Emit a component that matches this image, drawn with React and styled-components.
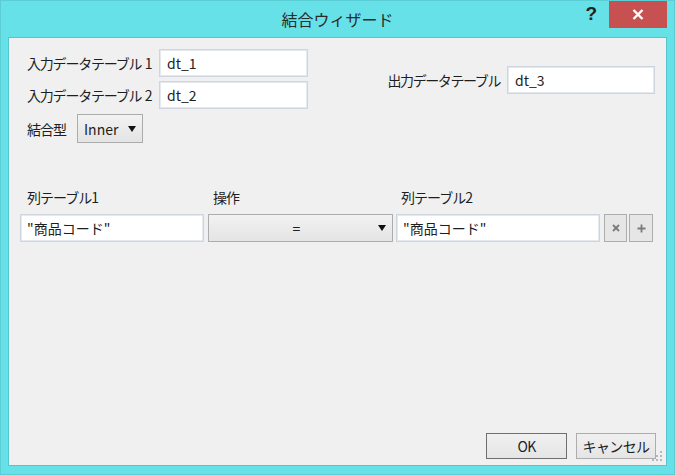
import React from "react";
import styled, { createGlobalStyle } from "styled-components";

const Global = createGlobalStyle`
  html, body { margin: 0; padding: 0; }
  body {
    width: 675px; height: 475px; overflow: hidden;
    font-family: "Noto Sans CJK JP", "Noto Sans", sans-serif;
    background: #67e1e8;
  }
`;

const Window = styled.div`
  width: 675px;
  height: 475px;
  box-sizing: border-box;
  background: #67e1e8;
  border: 1px solid #5bcdd5;
  display: flex;
  flex-direction: column;
  position: relative;
`;

const TitleBar = styled.div`
  height: 36px;
  display: flex;
  align-items: center;
  justify-content: center;
  position: relative;
  flex-shrink: 0;
`;

const Title = styled.div`
  font-size: 16px;
  color: #2a2a2a;
  margin-top: -1px;
`;

const Help = styled.div`
  position: absolute;
  right: 77px;
  top: 2px;
  font-family: "Liberation Sans", sans-serif;
  font-weight: bold;
  font-size: 19px;
  color: #222;
`;

const Close = styled.div`
  position: absolute;
  right: 7px;
  top: 0;
  width: 58px;
  height: 27px;
  background: #c75050;
  display: flex;
  align-items: center;
  justify-content: center;
`;

const Client = styled.div`
  margin: 0 7px 8px 7px;
  flex: 1;
  background: #f0f0f0;
  border: 1px solid #55c4cc;
  display: flex;
  flex-direction: column;
  padding: 11px 10px 6px 11px;
  position: relative;
  font-size: 14px;
  color: #1e1e1e;
`;

const Top = styled.div`
  display: flex;
  justify-content: space-between;
  padding-right: 1px;
`;

const LeftBlock = styled.div`
  display: flex;
  flex-direction: column;
  gap: 4px;
  padding-left: 7px;
`;

const FieldRow = styled.div`
  display: flex;
  align-items: center;
  margin-top: ${(p) => p.$mt || 0}px;
`;

const Label = styled.div`
  width: ${(p) => (p.$w ? p.$w + "px" : "auto")};
  letter-spacing: ${(p) => p.$ls ?? -1}px;
  white-space: pre;
`;

const TextBox = styled.div`
  box-sizing: border-box;
  width: ${(p) => p.$w}px;
  height: 28px;
  background: #fff;
  border: 1px solid #cfd5e0;
  box-shadow: inset 0 0 0 1px #e4e8ef;
  display: flex;
  align-items: center;
  padding-left: ${(p) => p.$pl || 7}px;
  font-size: 14px;
  color: #1e1e1e;
  white-space: nowrap;
`;

const Select = styled.div`
  box-sizing: border-box;
  width: ${(p) => p.$w}px;
  height: ${(p) => p.$h || 28}px;
  border: 1px solid #acacac;
  background: linear-gradient(#f2f2f2, #e4e4e4);
  display: flex;
  align-items: center;
  position: relative;
  font-size: 14px;
  color: #1e1e1e;
  padding: 0 6px;
`;

const SelText = styled.div`
  flex: 1;
  text-align: ${(p) => (p.$center ? "center" : "left")};
`;

const Arrow = styled.div`
  width: 0;
  height: 0;
  border-left: 4px solid transparent;
  border-right: 4px solid transparent;
  border-top: 6px solid #111;
`;

const RightBlock = styled.div`
  display: flex;
  align-items: center;
  gap: 7px;
  margin-top: 17px;
  align-self: flex-start;
`;

const Grid = styled.div`
  margin-top: 44px;
  display: flex;
  flex-direction: column;
  gap: 7px;
`;

const HeadRow = styled.div`
  display: flex;
`;

const Head = styled.div`
  width: ${(p) => p.$w}px;
  padding-left: ${(p) => p.$pl}px;
  box-sizing: border-box;
  letter-spacing: -1px;
`;

const Row = styled.div`
  display: flex;
  align-items: center;
`;

const Gap = styled.div`
  width: ${(p) => p.$w}px;
  flex-shrink: 0;
`;

const IconBtn = styled.div`
  box-sizing: border-box;
  width: ${(p) => p.$w}px;
  height: 28px;
  border: 1px solid #adadad;
  background: #e6e6e6;
  display: flex;
  align-items: center;
  justify-content: center;
`;

const Footer = styled.div`
  margin-top: auto;
  display: flex;
  justify-content: flex-end;
  gap: 9px;
`;

const Button = styled.div`
  box-sizing: border-box;
  width: ${(p) => p.$w}px;
  height: 26px;
  border: 1px solid ${(p) => (p.$default ? "#6f6f6f" : "#adadad")};
  background: linear-gradient(#f0f0f0, #e5e5e5);
  display: flex;
  align-items: center;
  justify-content: center;
  font-size: 14px;
  color: #1e1e1e;
  letter-spacing: -0.6px;
`;

const Grip = styled.svg`
  position: absolute;
  right: 3px;
  bottom: 3px;
`;

export default function App() {
  return (
    <>
      <Global />
      <Window>
        <TitleBar>
          <Title>結合ウィザード</Title>
          <Help>?</Help>
          <Close>
            <svg width="12" height="11" viewBox="0 0 12 11">
              <path d="M1.5 1 L10.5 10 M10.5 1 L1.5 10" stroke="#fff" strokeWidth="2.4" />
            </svg>
          </Close>
        </TitleBar>
        <Client>
          <Top>
            <LeftBlock>
              <FieldRow>
                <Label $w={132} $ls={-1.2}>{"入力データテーブル\u20041"}</Label>
                <TextBox $w={149}>dt_1</TextBox>
              </FieldRow>
              <FieldRow>
                <Label $w={132} $ls={-1.2}>{"入力データテーブル\u20042"}</Label>
                <TextBox $w={149}>dt_2</TextBox>
              </FieldRow>
              <FieldRow $mt={1}>
                <Label $w={50}>結合型</Label>
                <Select $w={66} $h={29}>
                  <SelText>Inner</SelText>
                  <Arrow />
                </Select>
              </FieldRow>
            </LeftBlock>
            <RightBlock>
              <Label $ls={-1.4}>出力データテーブル</Label>
              <TextBox $w={148}>dt_3</TextBox>
            </RightBlock>
          </Top>
          <Grid>
            <HeadRow>
              <Head $w={188} $pl={7}>列テーブル1</Head>
              <Head $w={188} $pl={5}>操作</Head>
              <Head $w={204} $pl={5}>列テーブル2</Head>
            </HeadRow>
            <Row>
              <TextBox $w={184} $pl={6}>"商品コード"</TextBox>
              <Gap $w={4} />
              <Select $w={185} $h={28}>
                <SelText $center>=</SelText>
                <Arrow />
              </Select>
              <Gap $w={3} />
              <TextBox $w={204} $pl={6}>"商品コード"</TextBox>
              <Gap $w={4} />
              <IconBtn $w={23}>
                <svg width="8" height="8" viewBox="0 0 8 8">
                  <path d="M1 1 L7 7 M7 1 L1 7" stroke="#7a7a7a" strokeWidth="1.8" />
                </svg>
              </IconBtn>
              <Gap $w={2} />
              <IconBtn $w={24}>
                <svg width="9" height="9" viewBox="0 0 9 9">
                  <path d="M4.5 0.5 V8.5 M0.5 4.5 H8.5" stroke="#7a7a7a" strokeWidth="1.8" />
                </svg>
              </IconBtn>
            </Row>
          </Grid>
          <Footer>
            <Button $w={81} $default>OK</Button>
            <Button $w={80}>キャンセル</Button>
          </Footer>
          <Grip width="12" height="12" viewBox="0 0 12 12">
            {[[9, 1], [9, 5], [5, 5], [9, 9], [5, 9], [1, 9]].map(([x, y], i) => (
              <rect key={i} x={x} y={y} width="2" height="2" fill="#b8b8b8" />
            ))}
          </Grip>
        </Client>
      </Window>
    </>
  );
}
